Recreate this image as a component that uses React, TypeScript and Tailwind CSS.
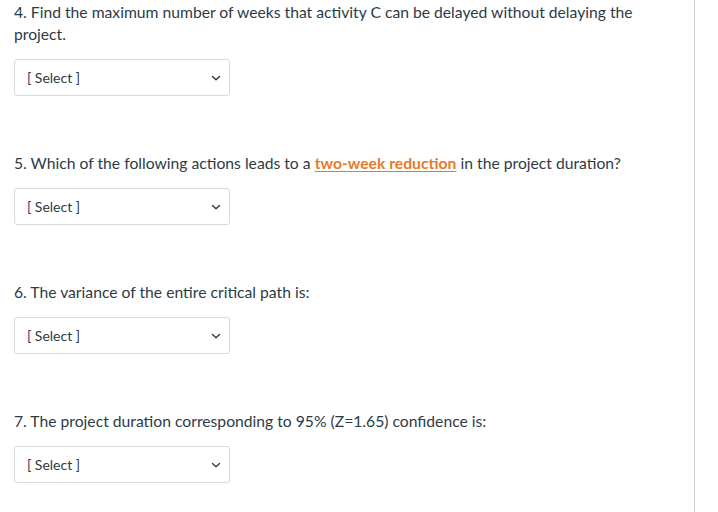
import React from 'react';

const SelectBox = () => (
  <div className="w-[216px] h-[37px] border border-[#d7dbde] rounded-[3px] bg-white flex items-center justify-between pl-[12px] pr-[8px]">
    <span className="text-[14px] text-[#2d3b45]">[ Select ]</span>
    <svg width="10" height="10" viewBox="0 0 10 10" fill="none">
      <path d="M1.5 3.5 L5 6.8 L8.5 3.5" stroke="#2d3b45" strokeWidth="1.4" strokeLinecap="round" strokeLinejoin="round" />
    </svg>
  </div>
);

const Question = ({ children }: { children: React.ReactNode }) => (
  <div className="flex flex-col">
    <p className="text-[15.7px] leading-[22px] text-[#2d3b45] pr-[50px]">{children}</p>
    <div className="mt-[14px]">
      <SelectBox />
    </div>
  </div>
);

export default function App() {
  return (
    <div className="w-[718px] h-[512px] bg-white overflow-hidden" style={{ fontFamily: 'Lato, "Noto Sans", sans-serif' }}>
      <div className="w-[695px] h-full border-r border-[#c7cdd1] pl-[14px] pt-[1px] flex flex-col gap-[56px]">
        <Question>
          4. Find the maximum number of weeks that activity C can be delayed without delaying the project.
        </Question>
        <Question>
          5. Which of the following actions leads to a{' '}
          <span className="text-[#e8792a] font-bold underline underline-offset-2">two-week reduction</span>{' '}
          in the project duration?
        </Question>
        <Question>6. The variance of the entire critical path is:</Question>
        <Question>7. The project duration corresponding to 95% (Z=1.65) confidence is:</Question>
      </div>
    </div>
  );
}
